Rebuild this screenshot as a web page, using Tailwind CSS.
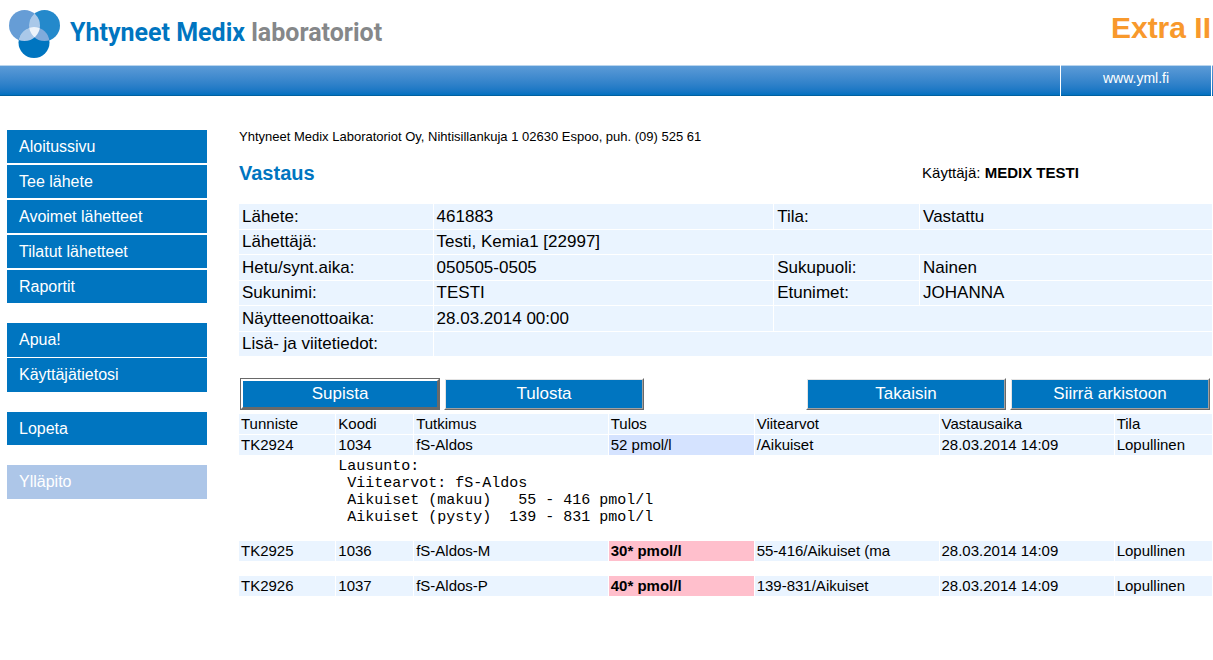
<!DOCTYPE html>
<html lang="fi">
<head>
<meta charset="utf-8">
<meta name="viewport" content="width=device-width, initial-scale=1">
<title>Yhtyneet Medix laboratoriot - Extra II</title>
<script src="https://cdn.jsdelivr.net/npm/@tailwindcss/browser@4"></script>
</head>
<body class="bg-white text-black font-['Liberation_Sans',Arial,sans-serif]">

<header>
  <div class="flex h-[65px] items-start justify-between pl-2 pr-[2px]">
    <a href="#" class="flex items-start gap-[9px] pt-[9px]">
      <svg class="h-[50px] w-[53px]" viewBox="0 0 53 50" aria-hidden="true">
        <defs>
          <clipPath id="left"><circle cx="16.5" cy="16.5" r="15.5"/></clipPath>
          <clipPath id="right"><circle cx="36.5" cy="16.5" r="15.5"/></clipPath>
        </defs>
        <circle cx="16.5" cy="16.5" r="15.5" fill="#669dd6"/>
        <circle cx="36.5" cy="16.5" r="15.5" fill="#2489cb"/>
        <circle cx="26" cy="33.5" r="15.5" fill="#0075c0"/>
        <circle cx="36.5" cy="16.5" r="15.5" fill="#aac8e9" clip-path="url(#left)"/>
        <circle cx="26" cy="33.5" r="15.5" fill="#aac8e9" clip-path="url(#left)"/>
        <circle cx="26" cy="33.5" r="15.5" fill="#7fabdc" clip-path="url(#right)"/>
        <g clip-path="url(#left)"><circle cx="26" cy="33.5" r="15.5" fill="#edf3fb" clip-path="url(#right)"/></g>
      </svg>
      <span class="pt-2 text-[25px] leading-8 font-bold whitespace-nowrap text-[#0075c0] font-['Roboto',sans-serif]">Yhtyneet Medix <span class="text-[#858789]">laboratoriot</span></span>
    </a>
    <div class="pt-2 text-[30px] leading-10 font-bold text-[#f8992c]">Extra II</div>
  </div>
  <div class="flex h-[31px] gap-px text-white">
    <div class="flex-1 border-t border-b border-t-[#b9d5ee] border-b-[#00609f] bg-linear-to-b from-[#5b9bd7] to-[#0071c1]"></div>
    <a href="#" class="w-[150px] border-t border-b border-t-[#b9d5ee] border-b-[#00609f] bg-linear-to-b from-[#5b9bd7] to-[#0071c1] pt-[2px] text-center text-sm">www.yml.fi</a>
    <div class="w-px border-t border-b border-t-[#b9d5ee] border-b-[#00609f] bg-linear-to-b from-[#5b9bd7] to-[#0071c1]"></div>
  </div>
</header>

<div class="flex items-start gap-8 pt-[34px] pr-px pl-[7px]">
  <nav class="flex w-[200px] shrink-0 flex-col gap-5 text-base text-white">
    <div class="flex flex-col gap-[2px]">
      <a href="#" class="h-[33px] bg-[#0075c0] px-3 leading-[33px]">Aloitussivu</a>
      <a href="#" class="h-[33px] bg-[#0075c0] px-3 leading-[33px]">Tee lähete</a>
      <a href="#" class="h-[33px] bg-[#0075c0] px-3 leading-[33px]">Avoimet lähetteet</a>
      <a href="#" class="h-[33px] bg-[#0075c0] px-3 leading-[33px]">Tilatut lähetteet</a>
      <a href="#" class="h-[33px] bg-[#0075c0] px-3 leading-[33px]">Raportit</a>
    </div>
    <div class="flex flex-col gap-px">
      <a href="#" class="h-[34px] bg-[#0075c0] px-3 leading-[33px]">Apua!</a>
      <a href="#" class="h-[34px] bg-[#0075c0] px-3 leading-[33px]">Käyttäjätietosi</a>
    </div>
    <a href="#" class="h-[33px] bg-[#0075c0] px-3 leading-[33px]">Lopeta</a>
    <a href="#" class="h-[34px] bg-[#adc6e8] px-3 leading-[34px]">Ylläpito</a>
  </nav>

  <main class="min-w-0 flex-1">
    <p class="text-[13px] leading-[14px]">Yhtyneet Medix Laboratoriot Oy, Nihtisillankuja 1 02630 Espoo, puh. (09) 525 61</p>
    <div class="mb-[2px] flex h-[58px] items-center">
      <h1 class="w-[70%] text-xl font-bold text-[#0075c0]">Vastaus</h1>
      <p class="pl-[2px] text-[15px]">Käyttäjä: <b>MEDIX TESTI</b></p>
    </div>

    <table class="w-full table-fixed border-separate border-spacing-0 text-left text-[17px] leading-6 [&_td]:border-b [&_td]:border-white [&_td]:bg-[#eaf4ff] [&_td]:p-0 [&_td]:pl-[3px] [&_th]:border-r [&_th]:border-b [&_th]:border-white [&_th]:bg-[#eaf4ff] [&_th]:p-0 [&_th]:pl-[3px] [&_th]:font-normal">
      <colgroup><col class="w-[20%]"><col class="w-[35%]"><col class="w-[15%]"><col class="w-[30%]"></colgroup>
      <tbody>
        <tr class="h-[26px]"><th scope="row">Lähete:</th><td class="border-r">461883</td><th scope="row">Tila:</th><td>Vastattu</td></tr>
        <tr class="h-[25px]"><th scope="row">Lähettäjä:</th><td colspan="3">Testi, Kemia1 [22997]</td></tr>
        <tr class="h-[26px]"><th scope="row">Hetu/synt.aika:</th><td class="border-r">050505-0505</td><th scope="row">Sukupuoli:</th><td>Nainen</td></tr>
        <tr class="h-[25px]"><th scope="row">Sukunimi:</th><td class="border-r">TESTI</td><th scope="row">Etunimet:</th><td>JOHANNA</td></tr>
        <tr class="h-[26px]"><th scope="row">Näytteenottoaika:</th><td class="border-r">28.03.2014 00:00</td><td colspan="2"></td></tr>
        <tr class="h-[25px]"><th scope="row">Lisä- ja viitetiedot:</th><td colspan="3"></td></tr>
      </tbody>
    </table>

    <div class="mt-[21px] flex gap-1 pr-[2px] pl-px text-[17px] text-white">
      <button type="button" class="h-8 w-[200px] border border-[#696969] bg-[#0075c0]"><span class="flex h-full items-center justify-center border-2 border-t-white border-r-[#696969] border-b-[#696969] border-l-white">Supista</span></button>
      <button type="button" class="h-8 w-[200px] border border-t-white border-r-[#696969] border-b-[#696969] border-l-white bg-[#0075c0]"><span class="flex h-full items-center justify-center border border-t-[#e3e3e3] border-r-[#a0a0a0] border-b-[#a0a0a0] border-l-[#e3e3e3]">Tulosta</span></button>
      <button type="button" class="ml-auto h-8 w-[200px] border border-t-white border-r-[#696969] border-b-[#696969] border-l-white bg-[#0075c0]"><span class="flex h-full items-center justify-center border border-t-[#e3e3e3] border-r-[#a0a0a0] border-b-[#a0a0a0] border-l-[#e3e3e3]">Takaisin</span></button>
      <button type="button" class="h-8 w-[200px] border border-t-white border-r-[#696969] border-b-[#696969] border-l-white bg-[#0075c0]"><span class="flex h-full items-center justify-center border border-t-[#e3e3e3] border-r-[#a0a0a0] border-b-[#a0a0a0] border-l-[#e3e3e3]">Siirrä arkistoon</span></button>
    </div>

    <table class="mt-1 w-full table-fixed border-separate border-spacing-0 text-left text-[15px] leading-5 whitespace-nowrap [&_td]:p-0 [&_td]:pl-[2px] [&_th]:border-r [&_th]:border-b [&_th]:border-white [&_th]:bg-[#eaf4ff] [&_th]:p-0 [&_th]:pl-[2px] [&_th]:font-normal [&_th:last-child]:border-r-0">
      <colgroup><col class="w-[10%]"><col class="w-[8%]"><col class="w-[20%]"><col class="w-[15%]"><col class="w-[19%]"><col class="w-[18%]"><col class="w-[10%]"></colgroup>
      <thead>
        <tr><th scope="col">Tunniste</th><th scope="col">Koodi</th><th scope="col">Tutkimus</th><th scope="col">Tulos</th><th scope="col">Viitearvot</th><th scope="col">Vastausaika</th><th scope="col">Tila</th></tr>
      </thead>
      <tbody>
        <tr class="[&>td]:border-r [&>td]:border-white [&>td:last-child]:border-r-0"><td class="bg-[#eaf4ff]">TK2924</td><td class="bg-[#eaf4ff]">1034</td><td class="bg-[#eaf4ff]">fS-Aldos</td><td class="bg-[#d5e3ff]">52 pmol/l</td><td class="bg-[#eaf4ff]">/Aikuiset</td><td class="bg-[#eaf4ff]">28.03.2014 14:09</td><td class="bg-[#eaf4ff]">Lopullinen</td></tr>
        <tr class="h-[86px] align-top"><td></td><td colspan="6"><pre class="pt-[3px] font-['Liberation_Mono','Courier_New',monospace] text-[15px] leading-[17px]">Lausunto:
 Viitearvot: fS-Aldos
 Aikuiset (makuu)   55 - 416 pmol/l
 Aikuiset (pysty)  139 - 831 pmol/l</pre></td></tr>
        <tr class="[&>td]:border-r [&>td]:border-white [&>td:last-child]:border-r-0"><td class="bg-[#eaf4ff]">TK2925</td><td class="bg-[#eaf4ff]">1036</td><td class="bg-[#eaf4ff]">fS-Aldos-M</td><td class="bg-[#ffbfcc] font-bold">30* pmol/l</td><td class="bg-[#eaf4ff]">55-416/Aikuiset (ma</td><td class="bg-[#eaf4ff]">28.03.2014 14:09</td><td class="bg-[#eaf4ff]">Lopullinen</td></tr>
        <tr class="h-[15px]"><td colspan="7"></td></tr>
        <tr class="[&>td]:border-r [&>td]:border-white [&>td:last-child]:border-r-0"><td class="bg-[#eaf4ff]">TK2926</td><td class="bg-[#eaf4ff]">1037</td><td class="bg-[#eaf4ff]">fS-Aldos-P</td><td class="bg-[#ffbfcc] font-bold">40* pmol/l</td><td class="bg-[#eaf4ff]">139-831/Aikuiset</td><td class="bg-[#eaf4ff]">28.03.2014 14:09</td><td class="bg-[#eaf4ff]">Lopullinen</td></tr>
      </tbody>
    </table>
  </main>
</div>
</body>
</html>
